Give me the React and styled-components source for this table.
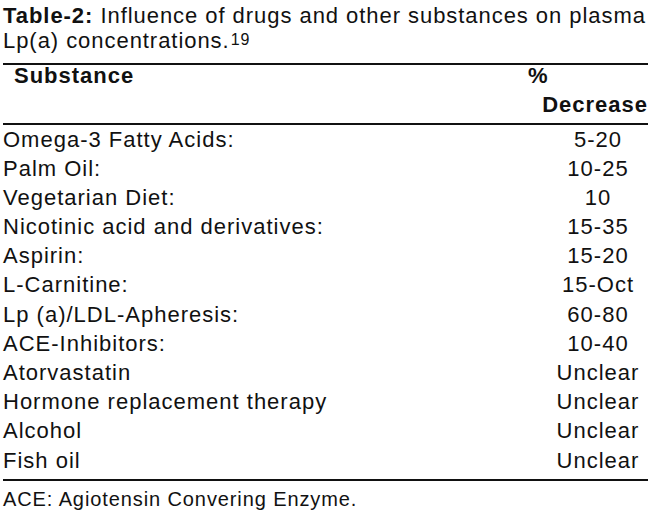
import React from 'react';
import styled, { createGlobalStyle } from 'styled-components';

const GlobalStyle = createGlobalStyle`
  html, body {
    margin: 0;
    padding: 0;
    background: #ffffff;
  }
  body {
    font-family: "Liberation Sans", Arial, sans-serif;
    color: #111111;
  }
`;

const Page = styled.div`
  width: 645px;
  margin-left: 3px;
  padding-top: 2.5px;
  letter-spacing: 1px;
`;

const Caption = styled.div`
  font-size: 22px;
  line-height: 25.5px;
  letter-spacing: 0.95px;
  white-space: nowrap;
  margin-bottom: 9px;
`;

const CaptionLabel = styled.b`
  font-weight: bold;
`;

const Ref = styled.sup`
  font-size: 16px;
  line-height: 0;
  vertical-align: 3px;
  margin-left: 1px;
`;

const Table = styled.div`
  border-top: 2px solid #111;
  border-bottom: 2px solid #111;
  font-size: 22px;
`;

const HeadRow = styled.div`
  display: grid;
  grid-template-columns: 1fr 120px;
  font-weight: bold;
  line-height: 22px;
  padding-bottom: 7px;
  border-bottom: 2px solid #111;
`;

const HeadCell = styled.div`
  padding-left: ${(p) => p.$indent || 0}px;
`;

const HeadLine = styled.div`
  text-align: ${(p) => p.$align || 'left'};
  margin-top: ${(p) => p.$gap || 0}px;
`;

const Body = styled.div`
  padding-bottom: 4.6px;
`;

const Row = styled.div`
  display: grid;
  grid-template-columns: 1fr 100px;
  line-height: 29.2px;
  height: 29.2px;
`;

const Name = styled.div`
  white-space: nowrap;
`;

const Value = styled.div`
  text-align: center;
`;

const Note = styled.div`
  font-size: 20px;
  line-height: 24px;
  letter-spacing: 0.9px;
  padding-top: 6px;
`;

const rows = [
  ['Omega-3 Fatty Acids:', '5-20'],
  ['Palm Oil:', '10-25'],
  ['Vegetarian Diet:', '10'],
  ['Nicotinic acid and derivatives:', '15-35'],
  ['Aspirin:', '15-20'],
  ['L-Carnitine:', '15-Oct'],
  ['Lp (a)/LDL-Apheresis:', '60-80'],
  ['ACE-Inhibitors:', '10-40'],
  ['Atorvastatin', 'Unclear'],
  ['Hormone replacement therapy', 'Unclear'],
  ['Alcohol', 'Unclear'],
  ['Fish oil', 'Unclear'],
];

function App() {
  return (
    <Page>
      <GlobalStyle />
      <Caption>
        <CaptionLabel>Table-2:</CaptionLabel> Influence of drugs and other substances on plasma
        <br />
        Lp(a) concentrations.<Ref>19</Ref>
      </Caption>
      <Table>
        <HeadRow>
          <HeadCell $indent={11}>Substance</HeadCell>
          <HeadCell>
            <HeadLine>%</HeadLine>
            <HeadLine $align="right" $gap={7}>Decrease</HeadLine>
          </HeadCell>
        </HeadRow>
        <Body>
          {rows.map(([name, value]) => (
            <Row key={name}>
              <Name>{name}</Name>
              <Value>{value}</Value>
            </Row>
          ))}
        </Body>
      </Table>
      <Note>ACE: Agiotensin Convering Enzyme.</Note>
    </Page>
  );
}

export default App;
